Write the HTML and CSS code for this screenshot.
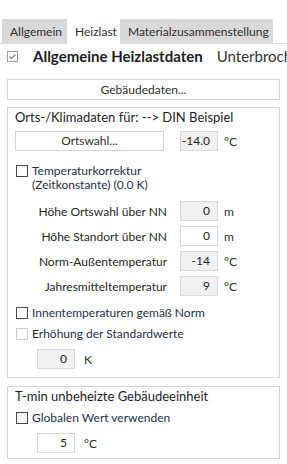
FILE: index.html
```html
<!DOCTYPE html>
<html>
<head>
<meta charset="utf-8">
<link rel="stylesheet" href="styles.css">
</head>
<body>
<div class="page">
  <div class="tabbar">
    <div class="tabs">
      <div class="tab t1">Allgemein</div>
      <div class="tab t2 active">Heizlast</div>
      <div class="tab t3">Materialzusammenstellung</div>
    </div>
  </div>
  <div class="header">
    <span class="hcheck"><svg width="11" height="11" viewBox="0 0 11 11"><rect x="0.5" y="0.5" width="10" height="10" fill="#fff" stroke="#a0a0a0"/><path d="M2.5 5.5 L4.5 7.5 L8.5 3.5" fill="none" stroke="#8a8a8a" stroke-width="1.4"/></svg></span>
    <span class="htitle">Allgemeine Heizlastdaten</span>
    <span class="hsep"></span>
    <span class="hsub">Unterbroch</span>
  </div>
  <div class="btn wide">Gebäudedaten...</div>

  <div class="group g1">
    <div class="gtitle">Orts-/Klimadaten für: --&gt; DIN Beispiel</div>
    <div class="ortrow">
      <div class="btn ort">Ortswahl...</div>
      <div class="field ro">-14.0</div>
      <span class="unit">°C</span>
    </div>
    <div class="cb two">
      <span class="box"></span>
      <span class="cbtext">Temperaturkorrektur<br>(Zeitkonstante) (0.0 K)</span>
    </div>
    <div class="rows">
      <div class="row"><span class="lbl">Höhe Ortswahl über NN</span><div class="field ro">0</div><span class="unit">m</span></div>
      <div class="row"><span class="lbl">Höhe Standort über NN</span><div class="field">0</div><span class="unit">m</span></div>
      <div class="row"><span class="lbl">Norm-Außentemperatur</span><div class="field ro">-14</div><span class="unit">°C</span></div>
      <div class="row"><span class="lbl">Jahresmitteltemperatur</span><div class="field ro">9</div><span class="unit">°C</span></div>
    </div>
    <div class="cb c-inn"><span class="box"></span><span class="cbtext">Innentemperaturen gemäß Norm</span></div>
    <div class="cb c-erh dis"><span class="box"></span><span class="cbtext">Erhöhung der Standardwerte</span></div>
    <div class="small-row"><div class="field ro">0</div><span class="unit2">K</span></div>
  </div>

  <div class="group g2">
    <div class="gtitle">T-min unbeheizte Gebäudeeinheit</div>
    <div class="cb c-glob"><span class="box"></span><span class="cbtext">Globalen Wert verwenden</span></div>
    <div class="small-row"><div class="field">5</div><span class="unit2">°C</span></div>
  </div>
</div>
</body>
</html>
```
FILE: styles.css
```css
html, body {
  margin: 0;
  padding: 0;
  background: #fff;
}
body {
  font-family: Lato, "Noto Sans", sans-serif;
  font-size: 12px;
  color: #2b2b2b;
  width: 287px;
  height: 464px;
  overflow: hidden;
}
.page {
  padding-top: 19px;
}
.tabbar {
  height: 24px;
  border-bottom: 1px solid #dcdcdc;
}
.tabs {
  display: flex;
  width: 271px;
  margin-left: 2px;
  height: 24px;
  background: #d9d9d9;
}
.tab {
  box-sizing: border-box;
  padding-left: 8px;
  line-height: 25px;
  color: #2e2e2e;
  white-space: nowrap;
}
.t1 { width: 65px; }
.t2 { width: 53px; }
.t3 { width: 153px; }
.tab.active {
  background: #fff;
  height: 25px;
}
.header {
  display: flex;
  align-items: center;
  height: 24px;
  padding-left: 7px;
  white-space: nowrap;
}
.hcheck {
  display: flex;
  width: 11px;
  height: 11px;
  margin-right: 15px;
}
.htitle {
  font-weight: bold;
  font-size: 15px;
  color: #1e1e1e;
}
.hsep {
  width: 1px;
  height: 15px;
  background: #333;
  margin: 0 7px;
}
.hsub {
  font-size: 15px;
  color: #333;
}
.btn {
  box-sizing: border-box;
  border: 1px solid #d4d4d4;
  background: #fff;
  text-align: center;
  color: #2e2e2e;
}
.btn.wide {
  margin: 11px 7px 0 7px;
  height: 21px;
  line-height: 19px;
}
.group {
  box-sizing: border-box;
  margin: 7px 7px 0 7px;
  border: 1px solid #d4d4d4;
  padding: 0 7px;
}
.g1 { height: 271px; }
.g2 {
  margin-top: 8px;
  height: 73px;
}
.gtitle {
  font-size: 13px;
  color: #1e1e1e;
  line-height: 18px;
  white-space: nowrap;
}
.ortrow {
  display: flex;
  align-items: center;
  margin-top: 5px;
  height: 20px;
}
.btn.ort {
  width: 149px;
  height: 20px;
  line-height: 18px;
  margin-right: 16px;
}
.field {
  box-sizing: border-box;
  width: 38px;
  height: 20px;
  border: 1px solid #d9d9d9;
  background: #fff;
  text-align: right;
  padding-right: 7px;
  line-height: 18px;
  color: #1e1e1e;
  flex: none;
}
.field.ro {
  background: #f0f0f0;
}
.unit {
  margin-left: 6px;
  color: #2e2e2e;
}
.unit2 {
  margin-left: 9px;
  color: #2e2e2e;
}
.cb {
  display: flex;
  align-items: center;
  color: #253045;
  line-height: 14px;
  padding-left: 1px;
  white-space: nowrap;
}
.cb.two {
  align-items: flex-start;
  margin-top: 14px;
  line-height: 14px;
}
.cb.two .cbtext {
  margin-top: -1px;
}
.box {
  box-sizing: border-box;
  width: 12px;
  height: 12px;
  border: 1px solid #4a4a4a;
  margin-right: 4px;
  flex: none;
}
.cb.dis .box {
  border-color: #cccccc;
}
.rows {
  display: flex;
  flex-direction: column;
  gap: 5px;
  margin-top: 9px;
}
.row {
  display: flex;
  align-items: center;
  height: 20px;
}
.lbl {
  width: 152px;
  text-align: right;
  margin-right: 13px;
  color: #262626;
  white-space: nowrap;
}
.c-inn { margin-top: 10px; }
.c-erh { margin-top: 7px; }
.small-row {
  display: flex;
  align-items: center;
  margin: 8px 0 0 22px;
}
.c-glob { margin-top: 6px; }
.g2 .small-row { margin-top: 8px; }
```
